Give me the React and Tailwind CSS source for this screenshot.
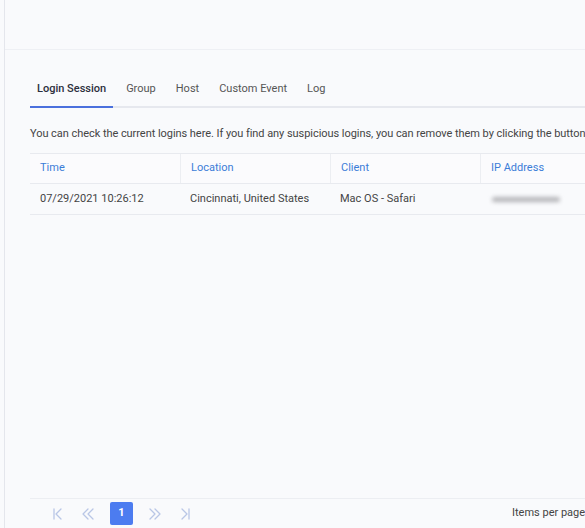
import React from "react";

const tabs = ["Login Session", "Group", "Host", "Custom Event", "Log"];

const columns = ["Time", "Location", "Client", "IP Address", "Action"];

const rows = [
  { time: "07/29/2021 10:26:12", location: "Cincinnati, United States", client: "Mac OS - Safari" },
];

const PageIcon = ({ type }) => {
  const paths = {
    first: ["M3 2v10", "M10 2 5 7l5 5"],
    prev: ["M7 2 2 7l5 5", "M12 2 7 7l5 5"],
    next: ["M2 2l5 5-5 5", "M7 2l5 5-5 5"],
    last: ["M4 2l5 5-5 5", "M11 2v10"],
  };
  return (
    <svg width="14" height="14" viewBox="0 0 14 14" fill="none" stroke="#b9c6e6" strokeWidth="1.3" strokeLinecap="round" strokeLinejoin="round">
      {paths[type].map((d, i) => (
        <path key={i} d={d} />
      ))}
    </svg>
  );
};

const App = () => {
  return (
    <div
      className="w-[585px] h-[528px] overflow-hidden bg-[#f9fafc] flex text-[11px] text-[#444]"
      style={{ fontFamily: "Roboto, 'Liberation Sans', sans-serif" }}
    >
      <div className="w-[4px] shrink-0" />
      <div className="flex-1 flex flex-col border-l border-[#e4e6ec] min-w-0">
        {/* top bar */}
        <div className="h-[50px] shrink-0 border-b border-[#eef0f4]" />

        <div className="flex-1 flex flex-col pl-[25px] min-w-0">
          {/* Tabs */}
          <div className="mt-[23px] flex border-b-2 border-[#e6e8ee] w-[700px]">
            {tabs.map((tab, i) => (
              <div
                key={tab}
                className={`h-[35px] px-[7px] mr-[6px] -mb-[2px] flex items-center border-b-2 ${
                  i === 0 ? "border-[#4a70dd] font-medium text-[#2c2f3d]" : "border-transparent text-[#555]"
                }`}
              >
                {tab}
              </div>
            ))}
          </div>

          {/* Description */}
          <p className="mt-[18px] leading-[16px] whitespace-nowrap tracking-[-0.05px]">
            You can check the current logins here. If you find any suspicious logins, you can remove them by clicking the button on the right.
          </p>

          {/* Table */}
          <div className="mt-[11px] w-[750px]">
            <div className="flex h-[31px] border-y border-[#e8eaef] bg-[#fbfbfd]">
              {columns.map((c, i) => (
                <div
                  key={c}
                  className={`w-[150px] flex items-center pl-[10px] text-[#3b7dd8] ${
                    i > 0 ? "border-l border-[#eceef2]" : ""
                  }`}
                >
                  {c}
                </div>
              ))}
            </div>
            {rows.map((r, i) => (
              <div key={i} className="flex h-[31px] border-b border-[#e8eaef]">
                <div className="w-[150px] flex items-center pl-[10px]">{r.time}</div>
                <div className="w-[150px] flex items-center pl-[10px]">{r.location}</div>
                <div className="w-[150px] flex items-center pl-[10px]">{r.client}</div>
                <div className="w-[150px] flex items-center pl-[10px]">
                  <div className="w-[68px] h-[5px] rounded-full bg-[#b4b4b8] blur-[2px] ml-[2px] mt-[1px]" />
                </div>
              </div>
            ))}
          </div>

          <div className="flex-1" />

          {/* Pagination */}
          <div className="h-[30px] shrink-0 border-t border-[#eceef2] flex items-center">
            <div className="flex items-center pl-[21px]">
              <PageIcon type="first" />
              <div className="w-[16px]" />
              <PageIcon type="prev" />
              <div className="w-[15px]" />
              <div className="w-[23px] h-[23px] rounded-[2px] bg-[#4c7cf0] text-white font-bold flex items-center justify-center">
                1
              </div>
              <div className="w-[15px]" />
              <PageIcon type="next" />
              <div className="w-[16px]" />
              <PageIcon type="last" />
            </div>
            <div className="ml-[320px] whitespace-nowrap">Items per page</div>
          </div>
        </div>
      </div>
    </div>
  );
};

export default App;
